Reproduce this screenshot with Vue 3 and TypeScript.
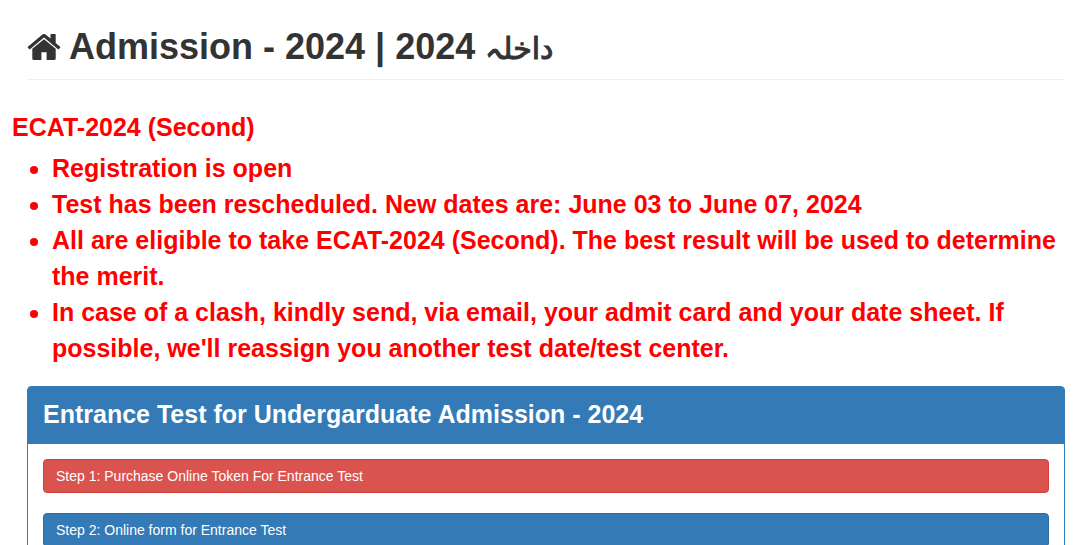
<script setup lang="ts">
interface Step {
  label: string
  kind: 'danger' | 'primary'
}

const notices: string[] = [
  'Registration is open',
  'Test has been rescheduled. New dates are: June 03 to June 07, 2024',
  'All are eligible to take ECAT-2024 (Second). The best result will be used to determine the merit.',
  "In case of a clash, kindly send, via email, your admit card and your date sheet. If possible, we'll reassign you another test date/test center.",
]

const steps: Step[] = [
  { label: 'Step 1: Purchase Online Token For Entrance Test', kind: 'danger' },
  { label: 'Step 2: Online form for Entrance Test', kind: 'primary' },
]
</script>

<template>
  <main class="page">
    <h1 class="title">
      <svg class="home" viewBox="0 0 1664 1280" aria-hidden="true">
        <path
          fill="currentColor"
          d="M1408 736v480q0 26-19 45t-45 19H960V896H704v384H320q-26 0-45-19t-19-45V736l1-6 575-474 575 474q1 2 1 6zm223-69-62 74q-8 9-21 11h-3q-13 0-21-7L832 168 140 745q-12 8-24 7-13-2-21-11l-62-74q-8-10-7-23.500T37 622L756 23q32-26 76-26t76 26l244 204V32q0-14 9-23t23-9h192q14 0 23 9t9 23v408l219 182q10 8 11 21.500t-7 23.500z"
        />
      </svg>
      <span>Admission - 2024 | 2024 <span class="urdu" lang="ur" dir="rtl">داخلہ</span></span>
    </h1>

    <section class="notice">
      <h2 class="notice-title">ECAT-2024 (Second)</h2>
      <ul class="notice-list">
        <li v-for="notice in notices" :key="notice">{{ notice }}</li>
      </ul>
    </section>

    <section class="panel">
      <h2 class="panel-heading">Entrance Test for Undergarduate Admission - 2024</h2>
      <div class="panel-body">
        <a v-for="step in steps" :key="step.label" href="#" class="step" :class="step.kind">{{ step.label }}</a>
      </div>
    </section>
  </main>
</template>

<style>
body {
  margin: 0;
  background: #fff;
}
</style>

<style scoped>
.page {
  box-sizing: border-box;
  padding: 27px 20px 0 12px;
  font-family: "Liberation Sans", Arial, sans-serif;
  font-size: 14px;
  line-height: 20px;
  color: #333;
}

.title {
  display: flex;
  align-items: center;
  gap: 8px;
  margin: 0 0 29px 15px;
  padding-bottom: 12px;
  border-bottom: 1px solid #eee;
  font-size: 36px;
  line-height: 40px;
  font-weight: 700;
}

.home {
  width: 34px;
  height: 26px;
}

.urdu {
  font-family: "DejaVu Sans", sans-serif;
  font-size: 30px;
  font-weight: 400;
  line-height: 1;
  -webkit-text-stroke: 1px currentColor;
}

.notice {
  color: #f00;
  font-size: 25px;
  line-height: 36px;
  font-weight: 700;
}

.notice-title {
  margin: 0 0 5px;
  font-size: inherit;
  line-height: inherit;
}

.notice-list {
  margin: 0 0 20px;
  padding-left: 40px;
}

.panel {
  margin-left: 15px;
  border: 1px solid #337ab7;
  border-radius: 4px;
}

.panel-heading {
  margin: 0;
  padding: 9px 15px 12px;
  background: #337ab7;
  border-radius: 2px 2px 0 0;
  color: #fff;
  font-size: 25px;
  line-height: 36px;
}

.panel-body {
  display: flex;
  flex-direction: column;
  gap: 20px;
  padding: 15px;
}

.step {
  padding: 6px 12px;
  border: 1px solid;
  border-radius: 4px;
  color: #fff;
  text-decoration: none;
}

.danger {
  background: #d9534f;
  border-color: #d43f3a;
}

.primary {
  background: #337ab7;
  border-color: #2e6da4;
}
</style>
